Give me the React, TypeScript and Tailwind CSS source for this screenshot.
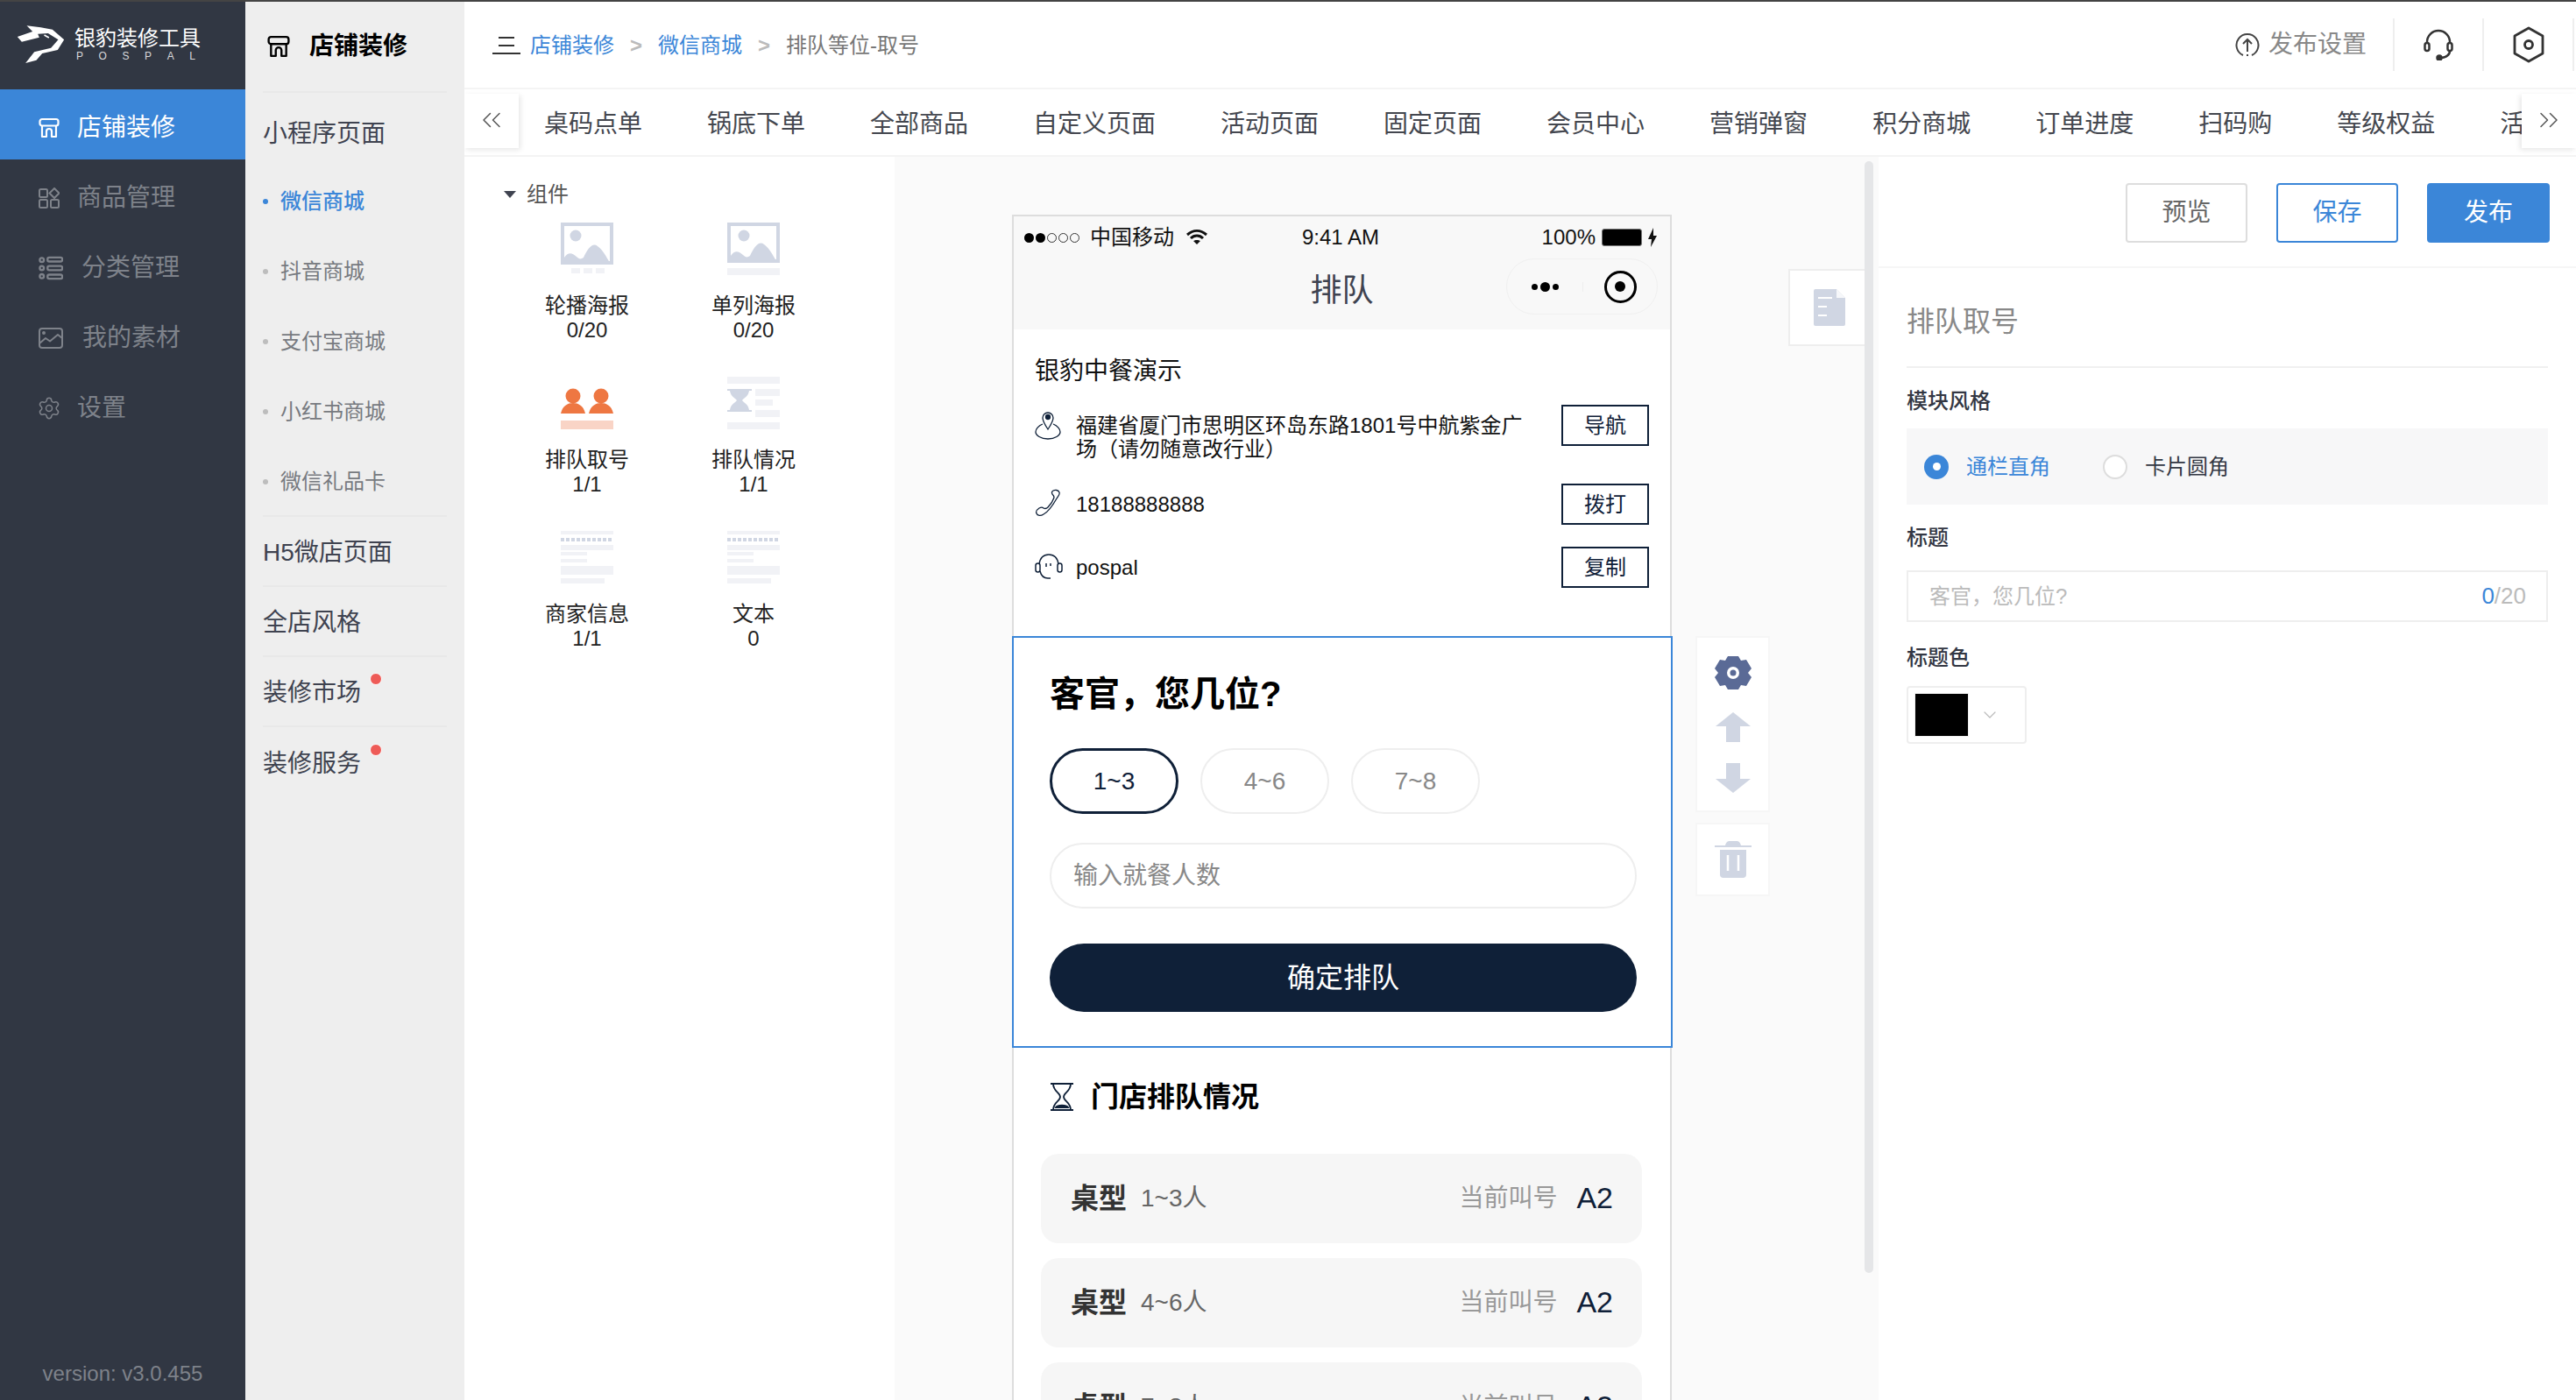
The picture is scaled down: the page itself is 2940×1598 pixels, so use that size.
import { Settings, ChevronDown, ChevronsLeft, ChevronsRight } from "lucide-react";

function StoreIcon({ className }: { className?: string }) {
  return (
    <svg viewBox="0 0 24 24" fill="none" stroke="currentColor" strokeWidth="2.2" strokeLinejoin="round" className={className}>
      <path d="M4 2h16a2.5 2.5 0 0 1 2.5 2.5V7A2.5 2.5 0 0 1 20 9.5H4A2.5 2.5 0 0 1 1.500 7V4.500A2.500 2.500 0 0 1 4 2z" />
      <path d="M4 9.500V22h5v-6a3 3 0 0 1 6 0v6h5V9.500" />
    </svg>
  );
}

function GoodsIcon({ className }: { className?: string }) {
  return (
    <svg viewBox="0 0 24 24" fill="none" stroke="currentColor" strokeWidth="2" className={className}>
      <rect x="1" y="2" width="9" height="9" rx="1.500" />
      <path d="M18 1l5.500 5.500L18 12l-5.500-5.500z" />
      <rect x="1" y="14" width="9" height="9" rx="1.500" />
      <rect x="14" y="14" width="9" height="9" rx="1.500" />
    </svg>
  );
}

function CategoryIcon({ className }: { className?: string }) {
  return (
    <svg viewBox="0 0 30 30" fill="none" stroke="currentColor" strokeWidth="2.500" className={className}>
      <circle cx="4" cy="5" r="2.500" />
      <circle cx="4" cy="15" r="2.500" />
      <circle cx="4" cy="25" r="2.500" />
      <rect x="11" y="2" width="18" height="5" rx="2" />
      <rect x="11" y="12.500" width="18" height="5" rx="2" />
      <rect x="11" y="23" width="18" height="5" rx="2" />
    </svg>
  );
}

function MaterialIcon({ className }: { className?: string }) {
  return (
    <svg viewBox="0 0 28 24" fill="none" stroke="currentColor" strokeWidth="2" strokeLinejoin="round" className={className}>
      <rect x="1" y="1" width="26" height="22" rx="3" />
      <path d="M1 18l7-6 5 3.500L22 8l5 4" />
      <circle cx="6" cy="6" r="1" />
    </svg>
  );
}

function Logo() {
  return (
    <svg viewBox="25 38 170 135" className="h-[45px] w-[57px] shrink-0" fill="#fff">
      <path d="M30 80L82 62 62 42l48 6 40 7 40 35-22 35-53 12-20 23-37 10 30-38 57-14 25-28-35-22-35 2 5 12-60 15z" />
      <path d="M122 74l16 9" stroke="#fff" strokeWidth="5" />
    </svg>
  );
}

function SideNav() {
  const items = [
    { label: "店铺装修", icon: <StoreIcon className="h-[24px] w-[24px]" />, active: true, gap: "gap-[20px]" },
    { label: "商品管理", icon: <GoodsIcon className="h-[24px] w-[24px]" />, gap: "gap-[20px]" },
    { label: "分类管理", icon: <CategoryIcon className="h-[28px] w-[28px]" />, gap: "gap-[21px]" },
    { label: "我的素材", icon: <MaterialIcon className="h-[24px] w-[28px]" />, gap: "gap-[22px]" },
    { label: "设置", icon: <Settings className="h-[28px] w-[28px]" strokeWidth={1.300} />, gap: "gap-[18px]", left: "pl-[42px]" },
  ];
  return (
    <aside className="relative flex h-full w-[280px] shrink-0 flex-col bg-[#313743]">
      <div className="flex h-[100px] items-start gap-[10px] pl-[18px] pt-[26px]">
        <Logo />
        <div className="flex w-[142px] flex-col pt-[1px]">
          <span className="whitespace-nowrap text-[24px] leading-[30px] text-white">银豹装修工具</span>
          <div className="-mt-[2px] flex justify-between pl-[2px] pr-[4px] text-[12px] leading-[14px] text-[#d8d9dc]">
            <span>P</span><span>O</span><span>S</span><span>P</span><span>A</span><span>L</span>
          </div>
        </div>
      </div>
      {items.map((it) => (
        <div
          key={it.label}
          className={`flex h-[80px] items-center pt-[7px] text-[28px] ${it.left ?? "pl-[44px]"} ${it.gap} ${it.active ? "bg-[#3b86d8] text-white" : "text-[#7e828a]"}`}
        >
          {it.icon}
          <span>{it.label}</span>
        </div>
      ))}
      <div className="mt-auto pb-[15px] text-center text-[24px] leading-[30px] text-[#7e828a]">version: v3.0.455</div>
    </aside>
  );
}

function SubNav() {
  const subs = ["微信商城", "抖音商城", "支付宝商城", "小红书商城", "微信礼品卡"];
  const rows: { label: string; dot?: boolean; line?: boolean }[] = [
    { label: "H5微店页面", line: true },
    { label: "全店风格", line: true },
    { label: "装修市场", dot: true, line: true },
    { label: "装修服务", dot: true },
  ];
  return (
    <aside className="flex h-full w-[250px] shrink-0 flex-col bg-[#eeeeee] px-[20px]">
      <div className="flex h-[104px] items-center gap-[22px] border-b-2 border-[#e8e8e8] pl-[5px] text-[28px] font-bold text-black">
        <StoreIcon className="h-[26px] w-[26px]" />
        <span>店铺装修</span>
      </div>
      <div className="flex h-[82px] items-center pt-[12px] text-[28px] text-[#3f4350]">小程序页面</div>
      <div className="border-b-2 border-[#e8e8e8]">
        {subs.map((s, i) => (
          <div key={s} className={`flex h-[80px] items-center gap-[14px] pt-[4px] text-[24px] ${i === 0 ? "font-medium text-[#3b86d8]" : "text-[#777a80]"}`}>
            <span className={`h-[6px] w-[6px] rounded-full ${i === 0 ? "bg-[#3b86d8]" : "bg-[#bdbdbd]"}`} />
            <span>{s}</span>
          </div>
        ))}
      </div>
      {rows.map((r) => (
        <div key={r.label} className={`flex h-[80px] shrink-0 items-center pt-[4px] text-[28px] text-[#3f4350] ${r.line ? "border-b-2 border-[#e8e8e8]" : ""}`}>
          <span className="relative">
            {r.label}
            {r.dot && <span className="absolute -right-[24px] -top-[2px] h-[14px] w-[14px] rounded-full border border-white bg-[#ee5b57]" />}
          </span>
        </div>
      ))}
    </aside>
  );
}

function Header() {
  return (
    <header className="flex h-[100px] shrink-0 items-center justify-between border-b-2 border-[#f4f4f4] pl-[32px]">
      <div className="flex items-center pt-[2px] text-[24px]">
        <svg viewBox="0 0 32 20" className="mr-[11px] h-[20px] w-[32px]" fill="#333">
          <rect x="7" y="0" width="18" height="2" />
          <rect x="7" y="9" width="18" height="2" />
          <rect x="0" y="18" width="32" height="2" />
        </svg>
        <span className="text-[#3b86d8]">店铺装修</span>
        <span className="mx-[18px] font-bold text-[#bbbbbb]">&gt;</span>
        <span className="text-[#3b86d8]">微信商城</span>
        <span className="mx-[18px] font-bold text-[#bbbbbb]">&gt;</span>
        <span className="text-[#777777]">排队等位-取号</span>
      </div>
      <div className="mr-[2px] flex items-center">
        <div className="flex items-center gap-[10px] pr-[30px] text-[28px] text-[#888888]">
          <svg viewBox="0 0 28 28" fill="none" stroke="#444" strokeWidth="2" className="h-[28px] w-[28px]">
            <path d="M9 26a12.500 12.500 0 1 1 10 0" />
            <path d="M14 22V8M9 13l5-5 5 5M14 25v2" />
          </svg>
          <span>发布设置</span>
        </div>
        <div className="flex h-[60px] w-[104px] items-center justify-center border-x-2 border-[#eeeeee]">
          <svg viewBox="0 0 34 36" fill="none" stroke="#333" strokeWidth="2.500" className="h-[36px] w-[34px]">
            <path d="M4 17V15a13 13 0 0 1 26 0v2" />
            <rect x="1.500" y="16" width="5" height="9" rx="2.500" />
            <rect x="27.500" y="16" width="5" height="9" rx="2.500" />
            <path d="M30 25c0 5-4 7-9 8" />
            <circle cx="18" cy="33" r="2.500" fill="#333" />
          </svg>
        </div>
        <div className="flex h-[60px] w-[103px] items-center justify-center border-r-2 border-[#eeeeee]">
          <svg viewBox="0 0 38 42" fill="none" stroke="#333" strokeWidth="2.800" className="h-[42px] w-[38px]">
            <path d="M19 2l16 9v20l-16 9-16-9V11z" strokeLinejoin="round" />
            <circle cx="19" cy="21" r="4.500" />
          </svg>
        </div>
      </div>
    </header>
  );
}

function TabBar() {
  const tabs = ["桌码点单", "锅底下单", "全部商品", "自定义页面", "活动页面", "固定页面", "会员中心", "营销弹窗", "积分商城", "订单进度", "扫码购", "等级权益", "活动中心"];
  return (
    <div className="relative flex h-[77px] shrink-0 items-center overflow-hidden border-b-2 border-[#f4f4f4] pt-[4px]">
      <div className="flex shrink-0 gap-[74px] pl-[91px] text-[28px] text-[#44474f]">
        {tabs.map((t) => (
          <span key={t} className="shrink-0">{t}</span>
        ))}
      </div>
      <div className="absolute left-0 top-[5px] flex h-[62px] w-[62px] items-start justify-center bg-white pt-[12px] shadow-[2px_2px_6px_rgba(0,0,0,0.10)]">
        <ChevronsLeft className="h-[36px] w-[36px] text-[#555555]" strokeWidth={1} />
      </div>
      <div className="absolute right-0 top-[5px] flex h-[62px] w-[62px] items-start justify-center bg-white pt-[12px] shadow-[-2px_2px_6px_rgba(0,0,0,0.10)]">
        <ChevronsRight className="h-[36px] w-[36px] text-[#555555]" strokeWidth={1} />
      </div>
    </div>
  );
}

function Thumb({ kind }: { kind: string }) {
  const grey = "#d0d6e3";
  const light = "#f1f2f6";
  if (kind === "carousel" || kind === "single") {
    const h = kind === "carousel" ? 48 : 46;
    return (
      <svg viewBox="0 0 60 60" className="h-[60px] w-[60px]">
        <rect x="2" y="2" width="56" height={h - 4} fill="#fff" stroke={grey} strokeWidth="4" />
        <circle cx={kind === "carousel" ? 17 : 19} cy="15" r="6.500" fill={grey} />
        <path d={`M4 ${h - 2}v-6c5-7 9-5 14-1 3 3 5 3 8 1 4-9 10-18 16-13 6 4 10 12 14 19H4z`} fill={grey} />
        {kind === "carousel" ? (
          <>
            <rect x="12" y="52" width="10" height="6" fill={light} />
            <rect x="26" y="52" width="10" height="6" fill={light} />
            <rect x="40" y="52" width="10" height="6" fill={light} />
          </>
        ) : (
          <rect x="0" y="52" width="60" height="8" fill={light} />
        )}
      </svg>
    );
  }
  if (kind === "queue") {
    return (
      <svg viewBox="0 0 60 60" className="h-[60px] w-[60px]">
        <circle cx="14" cy="22" r="8.500" fill="#ee7742" />
        <path d="M0 42c2-9 8-12 14-12s12 3 14 12z" fill="#ee7742" />
        <circle cx="46" cy="22" r="8.500" fill="#ee7742" />
        <path d="M32 42c2-9 8-12 14-12s12 3 14 12z" fill="#ee7742" />
        <rect x="0" y="50" width="60" height="10" fill="#f9d4c6" />
      </svg>
    );
  }
  if (kind === "status") {
    return (
      <svg viewBox="0 0 60 60" className="h-[60px] w-[60px]">
        <rect x="0" y="0" width="60" height="8" fill={light} />
        <path d="M0 14h28v2h-3c-1 7-6 8-8 11 2 3 7 4 8 11h3v2H0v-2h3c1-7 6-8 8-11-2-3-7-4-8-11H0z" fill={grey} />
        <rect x="32" y="14" width="28" height="8" fill={light} />
        <rect x="32" y="26" width="20" height="7" fill={light} />
        <rect x="32" y="38" width="28" height="8" fill={light} />
        <rect x="0" y="52" width="60" height="8" fill={light} />
      </svg>
    );
  }
  return (
    <svg viewBox="0 0 60 60" className="h-[60px] w-[60px]">
      <rect x="0" y="0" width="60" height="4" fill={light} />
      <line x1="0" y1="10" x2="58" y2="10" stroke={grey} strokeWidth="4" strokeDasharray="4 2" />
      <rect x="0" y="16" width="60" height="6" fill={light} />
      <rect x="0" y="24" width="30" height="4" fill={light} />
      <rect x="0" y="32" width="30" height="4" fill={light} />
      <rect x="0" y="40" width="60" height="10" fill={light} />
      <rect x="0" y="54" width="50" height="6" fill={light} />
    </svg>
  );
}

function ComponentPanel() {
  const list = [
    { kind: "carousel", label: "轮播海报", count: "0/20" },
    { kind: "single", label: "单列海报", count: "0/20" },
    { kind: "queue", label: "排队取号", count: "1/1" },
    { kind: "status", label: "排队情况", count: "1/1" },
    { kind: "text", label: "商家信息", count: "1/1" },
    { kind: "text", label: "文本", count: "0" },
  ];
  return (
    <section className="w-[491px] shrink-0 bg-white pl-[45px] pt-[28px]">
      <div className="flex h-[30px] items-center gap-[12px] text-[24px] text-[#555555]">
        <span className="h-0 w-0 border-x-[7px] border-t-[8px] border-x-transparent border-t-[#3f4350]" />
        组件
      </div>
      <div className="mt-[17px] grid w-[380px] grid-cols-[190px_190px] gap-y-[14px]">
        {list.map((c) => (
          <div key={c.label} className="flex h-[162px] flex-col items-center text-[24px] leading-[28px] text-[#222222]">
            <Thumb kind={c.kind} />
            <span className="mt-[21px]">{c.label}</span>
            <span>{c.count}</span>
          </div>
        ))}
      </div>
    </section>
  );
}

function StatusBar() {
  return (
    <div className="flex h-[46px] items-center pl-[12px] pr-[10px] pt-[2px] text-[24px] text-[#111111]">
      <div className="flex w-[317px] items-center">
        <div className="flex gap-[2px]">
          <span className="h-[11px] w-[11px] rounded-full bg-black" />
          <span className="h-[11px] w-[11px] rounded-full bg-black" />
          <span className="h-[11px] w-[11px] rounded-full border border-[#333]" />
          <span className="h-[11px] w-[11px] rounded-full border border-[#333]" />
          <span className="h-[11px] w-[11px] rounded-full border border-[#333]" />
        </div>
        <span className="ml-[12px]">中国移动</span>
        <svg viewBox="0 0 26 20" className="ml-[13px] h-[20px] w-[26px]" fill="none" stroke="#111" strokeWidth="3">
          <path d="M2 7c7-6 15-6 22 0M6 11c4-4 10-4 14 0" />
          <path d="M13 18l-4-4c2-1.500 6-1.500 8 0z" fill="#111" stroke="none" />
        </svg>
      </div>
      <span>9:41 AM</span>
      <div className="ml-auto flex items-center gap-[7px] pr-[4px]">
        <span>100%</span>
        <span className="h-[20px] w-[46px] rounded-[3px] border border-[#777] bg-black" />
        <svg viewBox="0 0 12 22" className="-ml-[1px] h-[22px] w-[12px]" fill="#111">
          <path d="M7 0L1 13h4l-1 9 7-13H7z" />
        </svg>
      </div>
    </div>
  );
}

function InfoRow({ icon, children, action, className }: { icon: React.ReactNode; children: React.ReactNode; action: string; className?: string }) {
  return (
    <div className={`flex h-[47px] items-start justify-between ${className ?? ""}`}>
      <div className="flex w-[520px] items-start text-[24px] leading-[27px] text-[#111111]">
        <div className="flex w-[47px] shrink-0 justify-start">{icon}</div>
        <div className="w-[520px] shrink-0 pt-[10px]">{children}</div>
      </div>
      <button className="flex h-[47px] w-[100px] items-center justify-center border-2 border-[#0f2038] text-[24px] text-[#0f2038]">{action}</button>
    </div>
  );
}

function PhoneShop() {
  return (
    <div className="h-[350px] px-[24px] pt-[32px]">
      <div className="text-[28px] leading-[32px] text-[#111111]">银豹中餐演示</div>
      <InfoRow
        className="mt-[22px]"
        action="导航"
        icon={
          <svg viewBox="0 0 30 34" fill="none" stroke="#0f2038" strokeWidth="1.300" className="mt-[6px] h-[34px] w-[30px]">
            <path d="M15 22c-4-6-6-9-6-13a6 6 0 0 1 12 0c0 4-2 7-6 13z" />
            <circle cx="15" cy="8" r="2.500" fill="#0f2038" />
            <path d="M9 16c-5 2-8 6-8 9 0 4 6 8 14 8s14-4 14-8c0-3-3-7-8-9" />
          </svg>
        }
      >
        福建省厦门市思明区环岛东路1801号中航紫金广场（请勿随意改行业）
      </InfoRow>
      <InfoRow
        className="mt-[43px]"
        action="拨打"
        icon={
          <svg viewBox="0 0 30 32" fill="none" stroke="#0f2038" strokeWidth="1.300" className="mt-[6px] h-[32px] w-[30px]">
            <path d="M21 2c2-1 6-1 7 2 1 2-1 4-3 7-4 7-9 15-15 18-3 2-7 2-8-1-1-2 0-4 3-6 2-1 4-1 5 0 2 1 3 1 5-1 3-3 6-8 7-11 0-2-1-3-2-4-1-2-1-3 1-4z" />
          </svg>
        }
      >
        18188888888
      </InfoRow>
      <InfoRow
        className="mt-[25px]"
        action="复制"
        icon={
          <svg viewBox="0 0 32 30" fill="none" stroke="#0f2038" strokeWidth="1.500" className="mt-[8px] h-[30px] w-[32px]">
            <path d="M5 12C6 5 10 1 16 1s10 4 11 11" />
            <rect x="1" y="11" width="5" height="10" rx="2.500" />
            <rect x="26" y="11" width="5" height="10" rx="2.500" />
            <path d="M6 20c1 4 4 8 9 8h3" />
            <path d="M13 11v4M18 11v3" />
          </svg>
        }
      >
        pospal
      </InfoRow>
    </div>
  );
}

function QueueForm() {
  return (
    <div className="relative z-10 -mx-[2px] -mr-[3px] h-[470px] border-2 border-[#3b86d8] bg-white pl-[41px] pr-[39px] pt-[40px]">
      <div className="text-[40px] font-bold leading-[48px] text-black">客官，您几位?</div>
      <div className="mt-[38px] flex gap-[25px]">
        <span className="flex h-[75px] w-[147px] items-center justify-center rounded-full border-[3px] border-[#0f2038] text-[28px] text-[#0f2038]">1~3</span>
        <span className="flex h-[75px] w-[147px] items-center justify-center rounded-full border-2 border-[#eeeeee] text-[28px] text-[#888888]">4~6</span>
        <span className="flex h-[75px] w-[147px] items-center justify-center rounded-full border-2 border-[#eeeeee] text-[28px] text-[#888888]">7~8</span>
      </div>
      <div className="mt-[33px] flex h-[75px] items-center rounded-full border-2 border-[#eeeeee] pl-[25px] text-[28px] text-[#888888]">输入就餐人数</div>
      <button className="mt-[40px] flex h-[78px] w-full items-center justify-center rounded-full bg-[#0f2038] text-[32px] text-white">确定排队</button>
    </div>
  );
}

function QueueStatus() {
  const rows = ["1~3人", "4~6人", "7~8人"];
  return (
    <div className="pl-[31px] pr-[32px] pt-[36px]">
      <div className="ml-[10px] flex h-[40px] items-center gap-[19px] text-[32px] font-semibold text-black">
        <svg viewBox="0 0 28 32" fill="none" stroke="#0f2038" strokeWidth="1.800" className="h-[32px] w-[28px]">
          <path d="M1 1h26M1 31h26M4 1c0 9 8 10 8 15s-8 6-8 15M24 1c0 9-8 10-8 15s8 6 8 15" />
          <path d="M7 28c2-3 12-3 14 0z" fill="#0f2038" />
        </svg>
        门店排队情况
      </div>
      <div className="mt-[45px] flex flex-col gap-[17px]">
        {rows.map((r) => (
          <div key={r} className="flex h-[102px] shrink-0 items-center rounded-[20px] bg-[#f6f6f6] pl-[34px] pr-[33px]">
            <span className="text-[32px] font-bold text-[#333333]">桌型</span>
            <span className="ml-[16px] text-[28px] text-[#666666]">{r}</span>
            <span className="ml-auto text-[28px] text-[#999999]">当前叫号</span>
            <span className="ml-[22px] pb-[2px] text-[34px] text-[#0f2038]">A2</span>
          </div>
        ))}
      </div>
    </div>
  );
}

function Phone() {
  return (
    <div className="w-[753px] border-x-2 border-t-2 border-[#dddddd] bg-white">
      <div className="h-[129px] bg-[#f8f8f8]">
        <StatusBar />
        <div className="relative flex h-[83px] items-center justify-center pb-[6px] text-[36px] text-[#3f4350]">
          排队
          <div className="absolute right-[14px] top-[2px] flex h-[64px] w-[173px] items-center rounded-full border border-[#f0f0f0]">
            <div className="flex w-[87px] items-center justify-center gap-[3px] border-r border-[#eeeeee]">
              <span className="h-[7px] w-[7px] rounded-full bg-black" />
              <span className="h-[11px] w-[11px] rounded-full bg-black" />
              <span className="h-[7px] w-[7px] rounded-full bg-black" />
            </div>
            <div className="flex flex-1 items-center justify-center">
              <span className="flex h-[37px] w-[37px] items-center justify-center rounded-full border-[3px] border-black">
                <span className="h-[12px] w-[12px] rounded-full bg-black" />
              </span>
            </div>
          </div>
        </div>
      </div>
      <PhoneShop />
      <QueueForm />
      <QueueStatus />
    </div>
  );
}

function Canvas() {
  return (
    <section className="relative min-w-0 flex-1 overflow-hidden bg-[#fafafa] pl-[134px] pt-[66px]">
      <Phone />
      {/* floating tools beside the phone */}
      <div className="absolute left-[1020px] top-[128px] flex h-[88px] w-[94px] items-center justify-center border-2 border-[#eeeeee] bg-white">
        <svg viewBox="0 0 36 42" className="h-[42px] w-[36px]" fill="#d0d6e3">
          <path d="M2 0h24l10 10v30a2 2 0 0 1-2 2H2a2 2 0 0 1-2-2V2a2 2 0 0 1 2-2z" />
          <path d="M26 0v10h10" fill="#fff" opacity="0.800" />
          <path d="M5 10h16M5 20h10M5 30h10" stroke="#fff" strokeWidth="2" />
        </svg>
      </div>
      <div className="absolute left-[914px] top-[547px] flex w-[85px] flex-col gap-[12px]">
        <div className="flex h-[201px] flex-col items-center justify-between border-2 border-[#f6f6f6] bg-white py-[20px]">
          <svg viewBox="0 0 42 40" className="h-[40px] w-[42px]" fill="#5a6a96">
            <path d="M15 1h12l3 5 6-1 6 10-4 5 4 5-6 10-6-1-3 5H15l-3-5-6 1-6-10 4-5-4-5 6-10 6 1z" />
            <circle cx="21" cy="20" r="7" fill="#fff" />
            <circle cx="21" cy="20" r="3.500" fill="#5a6a96" />
          </svg>
          <svg viewBox="0 0 40 34" className="h-[34px] w-[40px]" fill="#d0d6e3">
            <path d="M20 0l20 16H28v18H12V16H0z" />
          </svg>
          <svg viewBox="0 0 40 34" className="h-[34px] w-[40px]" fill="#d0d6e3">
            <path d="M20 34L0 18h12V0h16v18h12z" />
          </svg>
        </div>
        <div className="flex h-[84px] items-center justify-center border-2 border-[#f6f6f6] bg-white">
          <svg viewBox="0 0 42 42" className="h-[42px] w-[42px]" fill="#d0d6e3">
            <path d="M12 5c1-4 3-5 5-5h8c2 0 4 1 5 5h12v2H0V5z" />
            <path d="M6 10h30v28a4 4 0 0 1-4 4H10a4 4 0 0 1-4-4z" />
            <path d="M15 16v18M27 16v18" stroke="#fff" strokeWidth="2.500" />
          </svg>
        </div>
      </div>
      <div className="absolute left-[1107px] top-[5px] h-[1269px] w-[10px] rounded-[5px] bg-[#e5e6e8]" />
    </section>
  );
}

function Radio({ on, label }: { on?: boolean; label: string }) {
  return (
    <div className="flex items-center gap-[20px]">
      {on ? (
        <span className="flex h-[28px] w-[28px] items-center justify-center rounded-full bg-[#3b86d8]">
          <span className="h-[9px] w-[9px] rounded-full bg-white" />
        </span>
      ) : (
        <span className="h-[28px] w-[28px] rounded-full border-2 border-[#dddddd] bg-white" />
      )}
      <span className={`text-[24px] ${on ? "text-[#3b86d8]" : "text-[#333743]"}`}>{label}</span>
    </div>
  );
}

function SettingsPanel() {
  return (
    <section className="flex w-[796px] shrink-0 flex-col bg-white">
      <div className="flex h-[127px] shrink-0 items-start justify-end gap-[33px] border-b-2 border-[#f6f6f6] pr-[30px] pt-[30px]">
        <button className="flex h-[68px] w-[139px] items-center justify-center rounded-[4px] border-2 border-[#dddddd] text-[28px] text-[#666666]">预览</button>
        <button className="flex h-[68px] w-[139px] items-center justify-center rounded-[4px] border-2 border-[#3b86d8] text-[28px] text-[#3b86d8]">保存</button>
        <button className="flex h-[68px] w-[140px] items-center justify-center rounded-[4px] bg-[#3b86d8] text-[28px] text-white">发布</button>
      </div>
      <div className="px-[32px]">
        <div className="flex h-[114px] items-center border-b-2 border-[#f0f0f0] pt-[10px] text-[32px] text-[#888888]">排队取号</div>
        <div className="flex h-[69px] items-center pt-[6px] text-[24px] font-medium text-[#333743]">模块风格</div>
        <div className="flex h-[87px] items-center gap-[60px] bg-[#f7f7f8] pl-[20px]">
          <Radio on label="通栏直角" />
          <Radio label="卡片圆角" />
        </div>
        <div className="flex h-[75px] items-center text-[24px] font-medium text-[#333743]">标题</div>
        <div className="flex h-[59px] items-center justify-between border-2 border-[#eeeeee] pl-[24px] pr-[23px] text-[24px] text-[#bbbbbb]">
          <span>客官，您几位?</span>
          <span className="text-[26px]"><span className="text-[#3b86d8]">0</span>/20</span>
        </div>
        <div className="flex h-[73px] items-center pt-[8px] text-[24px] font-medium text-[#333743]">标题色</div>
        <div className="flex h-[66px] w-[137px] items-center gap-[12px] rounded-[4px] border-2 border-[#eeeeee] pl-[7px]">
          <span className="h-[50px] w-[62px] border border-[#f0f0f0] bg-black" />
          <ChevronDown className="h-[24px] w-[24px] text-[#bbbbbb]" strokeWidth={1.200} />
        </div>
      </div>
    </section>
  );
}

export default function App() {
  return (
    <div className="flex h-[1598px] w-[2940px] flex-col overflow-hidden bg-white font-['Liberation_Sans','Noto_Sans_CJK_SC',sans-serif]">
      <div className="h-[2px] shrink-0 bg-[#444444]" />
      <div className="flex min-h-0 flex-1">
        <SideNav />
        <SubNav />
        <main className="flex min-w-0 flex-1 flex-col">
          <Header />
          <TabBar />
          <div className="flex min-h-0 flex-1">
            <ComponentPanel />
            <Canvas />
            <SettingsPanel />
          </div>
        </main>
      </div>
    </div>
  );
}
